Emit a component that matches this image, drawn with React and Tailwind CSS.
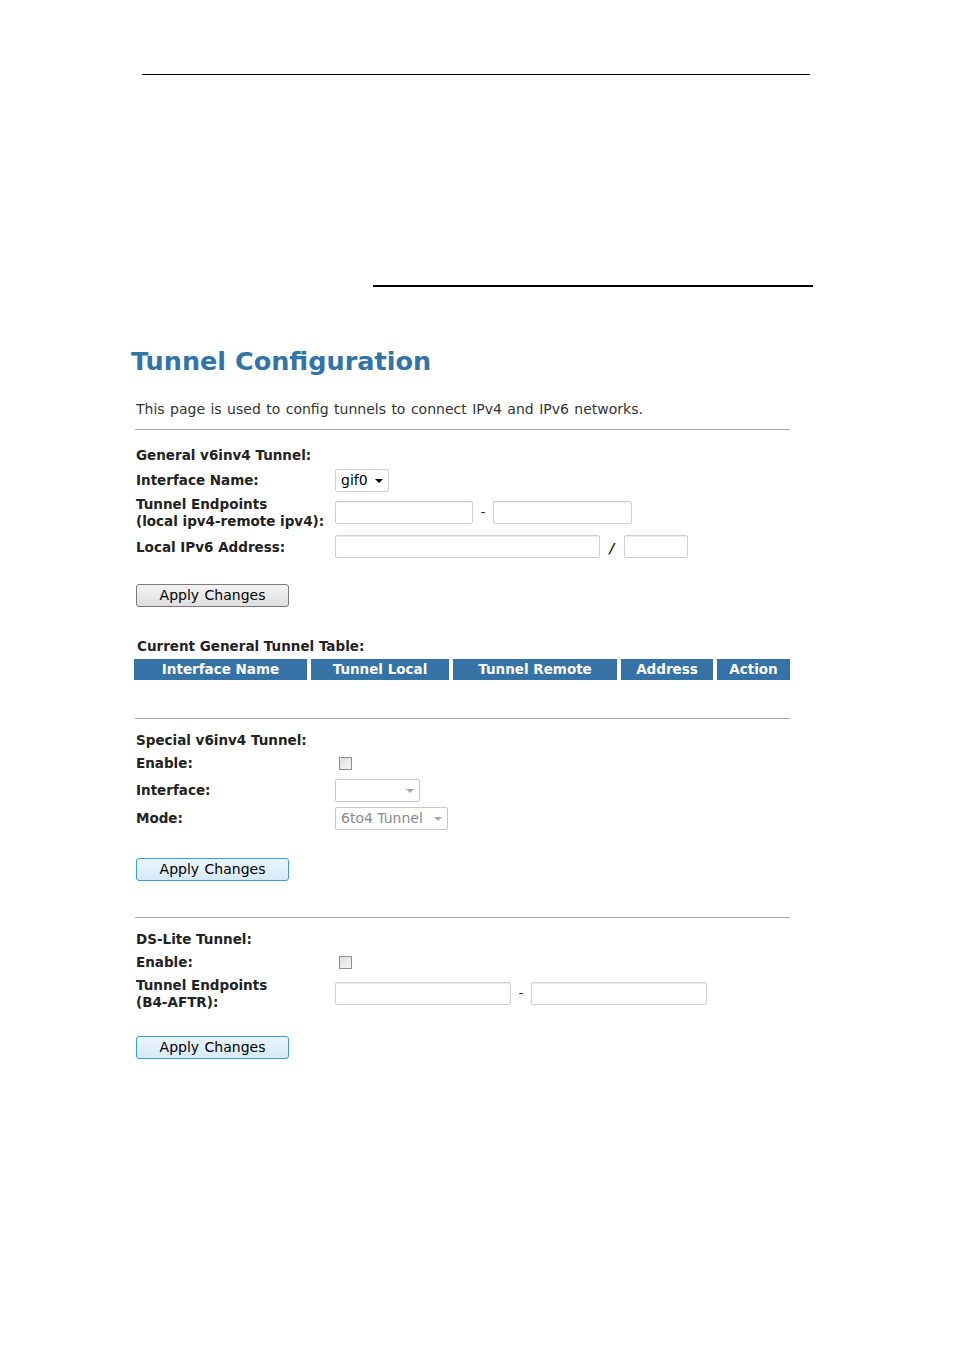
import { Fragment } from 'react'

const font = { fontFamily: '"DejaVu Sans", Verdana, sans-serif' }

function Input({ w }) {
  return <div className={`h-[23px] ${w} rounded-[2px] border border-[#cfcfcf] bg-white shadow-[inset_0_1px_0_#ececec]`} />
}

function Caret({ color = 'border-t-black' }) {
  return <span className={`inline-block h-0 w-0 border-x-[4px] border-t-[4px] border-x-transparent ${color}`} />
}

function Select({ w, value, disabled }) {
  return (
    <div
      className={`flex h-[23px] ${w} items-center justify-between rounded-[2px] border bg-white pl-[5px] pr-[5px] text-[14px] ${
        disabled ? 'border-[#c9c9c9] text-[#8a8a8a]' : 'border-[#d0d0d0] text-black'
      }`}
    >
      <span>{value}</span>
      <Caret color={disabled ? 'border-t-[#a8a8a8]' : 'border-t-black'} />
    </div>
  )
}

function Checkbox() {
  return <div className="ml-[4px] h-[13px] w-[13px] border border-[#8f8f8f] bg-gradient-to-br from-[#dcdcdc] to-[#f7f7f7]" />
}

function ApplyButton({ focused }) {
  return (
    <button
      className={`flex h-[23px] w-[153px] items-center justify-center rounded-[3px] border text-[14px] text-black [word-spacing:1px] ${
        focused
          ? 'border-[#3c9be0] bg-gradient-to-b from-[#eaf5fc] to-[#d5e9f6]'
          : 'border-[#7a7a7a] bg-gradient-to-b from-[#f4f4f4] to-[#dedede]'
      }`}
    >
      Apply Changes
    </button>
  )
}

function Label({ children }) {
  return <div className="text-[13.5px] font-bold leading-[17px] text-[#222]">{children}</div>
}

function Hr() {
  return <div className="h-px w-[655px] bg-[#a8a8a8]" />
}

function Dash() {
  return <span className="w-[20px] text-center text-[14px] text-[#333]">-</span>
}

const headers = [
  ['Interface Name', 'w-[173px]'],
  ['Tunnel Local', 'w-[138px]'],
  ['Tunnel Remote', 'w-[164px]'],
  ['Address', 'w-[92px]'],
  ['Action', 'w-[73px]'],
]

export default function App() {
  return (
    <div className="min-h-[1350px] w-[954px] bg-white" style={font}>
      <div className="h-[74px]" />
      <div className="ml-[142px] h-px w-[668px] bg-black" />
      <div className="ml-[373px] mt-[210px] h-[2px] w-[440px] bg-black" />

      <h1 className="ml-[131px] mt-[57px] text-[25.5px] font-bold leading-[34px] text-[#3273a8]">Tunnel Configuration</h1>

      <div className="ml-[135px] w-[655px]">
        <p className="ml-[1px] mt-[23px] text-[14px] leading-[17px] text-[#333] [word-spacing:1px]">
          This page is used to config tunnels to connect IPv4 and IPv6 networks.
        </p>
        <div className="mt-[11px]">
          <Hr />
        </div>

        {/* general v6inv4 */}
        <div className="mt-[17px] ml-[1px]">
          <Label>General v6inv4 Tunnel:</Label>
          <div className="mt-[5px] grid grid-cols-[199px_1fr] items-center">
            <Label>Interface Name:</Label>
            <Select w="w-[54px]" value="gif0" />
          </div>
          <div className="mt-[4px] grid grid-cols-[199px_1fr] items-center">
            <Label>
              Tunnel Endpoints
              <br />
              (local ipv4-remote ipv4):
            </Label>
            <div className="-mt-[1px] flex items-center">
              <Input w="w-[138px]" />
              <Dash />
              <Input w="w-[139px]" />
            </div>
          </div>
          <div className="mt-[5px] grid grid-cols-[199px_1fr] items-center">
            <Label>Local IPv6 Address:</Label>
            <div className="-mt-[1px] flex items-center">
              <Input w="w-[265px]" />
              <span className="mt-[4px] w-[24px] text-center text-[14px] font-bold italic text-[#222]">/</span>
              <Input w="w-[64px]" />
            </div>
          </div>
          <div className="mt-[25px]">
            <ApplyButton />
          </div>
        </div>

        <div className="mt-[31px] ml-[2px]">
          <Label>Current General Tunnel Table:</Label>
        </div>
        <div className="mt-[4px] -ml-[1px] flex gap-[4px]">
          {headers.map(([h, w]) => (
            <div
              key={h}
              className={`flex h-[21px] ${w} items-center justify-center bg-[#3573a6] text-[13.5px] font-bold text-white`}
            >
              {h}
            </div>
          ))}
        </div>

        <div className="mt-[38px]">
          <Hr />
        </div>

        {/* special v6inv4 */}
        <div className="mt-[13px] ml-[1px]">
          <Label>Special v6inv4 Tunnel:</Label>
          <div className="mt-[6px] grid grid-cols-[199px_1fr] items-center">
            <Label>Enable:</Label>
            <Checkbox />
          </div>
          <div className="mt-[7px] grid grid-cols-[199px_1fr] items-center">
            <Label>Interface:</Label>
            <Select w="w-[85px]" value="" disabled />
          </div>
          <div className="mt-[5px] grid grid-cols-[199px_1fr] items-center">
            <Label>Mode:</Label>
            <Select w="w-[113px]" value="6to4 Tunnel" disabled />
          </div>
          <div className="mt-[28px]">
            <ApplyButton focused />
          </div>
        </div>

        <div className="mt-[36px]">
          <Hr />
        </div>

        {/* ds-lite */}
        <div className="mt-[13px] ml-[1px]">
          <Label>DS-Lite Tunnel:</Label>
          <div className="mt-[6px] grid grid-cols-[199px_1fr] items-center">
            <Label>Enable:</Label>
            <Checkbox />
          </div>
          <div className="mt-[6px] grid grid-cols-[199px_1fr] items-center">
            <Label>
              Tunnel Endpoints
              <br />
              (B4-AFTR):
            </Label>
            <div className="-mt-[2px] flex items-center">
              <Input w="w-[176px]" />
              <Dash />
              <Input w="w-[176px]" />
            </div>
          </div>
          <div className="mt-[25px]">
            <ApplyButton focused />
          </div>
        </div>
      </div>
    </div>
  )
}
